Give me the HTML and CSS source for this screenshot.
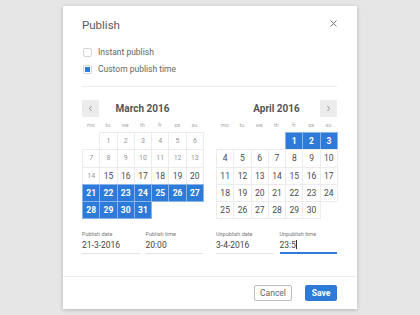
FILE: index.html
```html
<!DOCTYPE html>
<html lang="en">
<head>
    <meta charset="UTF-8">
    <title>Publish</title>
    <link rel="stylesheet" href="styles.css">
</head>
<body>
    <div class="dialog">
        <div class="content">
            <div class="header">
                <span class="title">Publish</span>
                <svg class="close" width="7" height="7" viewBox="0 0 7 7"><path d="M0.5 0.5L6.5 6.5M6.5 0.5L0.5 6.5" stroke="#777" stroke-width="1"/></svg>
            </div>

            <div class="options">
                <label class="option"><span class="check"></span>Instant publish</label>
                <label class="option"><span class="check checked"></span>Custom publish time</label>
            </div>

            <div class="calendars">
                <div class="calendar">
                    <div class="cal-head">
                        <span class="nav"><svg width="5" height="7" viewBox="0 0 5 7"><path d="M3.5 1L1.5 3.5L3.5 6" fill="none" stroke="#888" stroke-width="0.9"/></svg></span>
                        <span class="month">March 2016</span>
                        <span class="nav-space"></span>
                    </div>
                    <div class="weekdays">
                        <span>mo</span><span>tu</span><span>we</span><span>th</span><span>fr</span><span>sa</span><span>su</span>
                    </div>
                    <div class="days">
                        <span class="empty"></span><span class="day past">1</span><span class="day past">2</span><span class="day past">3</span><span class="day past">4</span><span class="day past">5</span><span class="day past">6</span>
                        <span class="day past">7</span><span class="day past">8</span><span class="day past">9</span><span class="day past">10</span><span class="day past">11</span><span class="day past">12</span><span class="day past">13</span>
                        <span class="day past">14</span><span class="day">15</span><span class="day">16</span><span class="day">17</span><span class="day">18</span><span class="day">19</span><span class="day">20</span>
                        <span class="day selected">21</span><span class="day selected">22</span><span class="day selected">23</span><span class="day selected">24</span><span class="day selected">25</span><span class="day selected">26</span><span class="day selected">27</span>
                        <span class="day selected">28</span><span class="day selected">29</span><span class="day selected">30</span><span class="day selected">31</span><span class="empty"></span><span class="empty"></span><span class="empty"></span>
                    </div>
                </div>

                <div class="calendar">
                    <div class="cal-head">
                        <span class="nav-space"></span>
                        <span class="month">April 2016</span>
                        <span class="nav"><svg width="5" height="7" viewBox="0 0 5 7"><path d="M1.5 1L3.5 3.5L1.5 6" fill="none" stroke="#888" stroke-width="0.9"/></svg></span>
                    </div>
                    <div class="weekdays">
                        <span>mo</span><span>tu</span><span>we</span><span>th</span><span>fr</span><span>sa</span><span>su</span>
                    </div>
                    <div class="days">
                        <span class="empty"></span><span class="empty"></span><span class="empty"></span><span class="empty"></span><span class="day selected">1</span><span class="day selected">2</span><span class="day selected">3</span>
                        <span class="day">4</span><span class="day">5</span><span class="day">6</span><span class="day">7</span><span class="day">8</span><span class="day">9</span><span class="day">10</span>
                        <span class="day">11</span><span class="day">12</span><span class="day">13</span><span class="day">14</span><span class="day">15</span><span class="day">16</span><span class="day">17</span>
                        <span class="day">18</span><span class="day">19</span><span class="day">20</span><span class="day">21</span><span class="day">22</span><span class="day">23</span><span class="day">24</span>
                        <span class="day">25</span><span class="day">26</span><span class="day">27</span><span class="day">28</span><span class="day">29</span><span class="day">30</span><span class="empty"></span>
                    </div>
                </div>
            </div>

            <div class="fields">
                <div class="field-group">
                    <div class="field">
                        <div class="field-label">Publish date</div>
                        <div class="field-value">21-3-2016</div>
                    </div>
                    <div class="field">
                        <div class="field-label">Publish time</div>
                        <div class="field-value">20:00</div>
                    </div>
                </div>
                <div class="field-group">
                    <div class="field">
                        <div class="field-label">Unpublish date</div>
                        <div class="field-value">3-4-2016</div>
                    </div>
                    <div class="field">
                        <div class="field-label">Unpublish time</div>
                        <div class="field-value active">23:5<span class="cursor"></span></div>
                    </div>
                </div>
            </div>
        </div>

        <div class="footer">
            <button class="btn cancel">Cancel</button>
            <button class="btn save">Save</button>
        </div>
    </div>
</body>
</html>
```

FILE: styles.css
```css
body {
    margin: 0;
    height: 315px;
    background-color: #e6e6e6;
    font-family: Roboto, 'Liberation Sans', sans-serif;
    color: #555;
    overflow: hidden;
}

.dialog {
    width: 294px;
    height: 303px;
    margin: 6px 0 0 63px;
    background: #fff;
    box-shadow: 0 1px 4px rgba(0, 0, 0, 0.22);
    display: flex;
    flex-direction: column;
}

.content {
    padding: 0 20px 0 19px;
}

.header {
    display: flex;
    justify-content: space-between;
    align-items: flex-start;
    padding-top: 12px;
    height: 14px;
}

.title {
    font-size: 11.5px;
    line-height: 14px;
    color: #5a5a5a;
}

.close {
    margin-top: 2px;
}

.options {
    margin-top: 11.5px;
    padding-bottom: 8.5px;
    border-bottom: 1px solid #ededed;
}

.option {
    display: flex;
    align-items: center;
    height: 17px;
    font-size: 8.5px;
    color: #666;
}

.check {
    width: 7px;
    height: 7px;
    border: 1px solid #d6d6d6;
    border-radius: 2px;
    margin: 0 6px 0 1px;
    display: flex;
    align-items: center;
    justify-content: center;
}

.check.checked::after {
    content: '';
    width: 5px;
    height: 5px;
    background: #2d7ad8;
}

.calendars {
    display: grid;
    grid-template-columns: 121px 121px;
    column-gap: 13px;
    margin-top: 13px;
}

.cal-head {
    display: flex;
    justify-content: space-between;
    align-items: center;
    height: 17px;
}

.nav, .nav-space {
    width: 17px;
    height: 17px;
}

.nav {
    background: #ececec;
    display: flex;
    align-items: center;
    justify-content: center;
}

.month {
    font-size: 10px;
    font-weight: 700;
    color: #555;
}

.weekdays {
    display: grid;
    grid-template-columns: repeat(7, 1fr);
    margin-top: 2px;
    height: 13px;
    line-height: 13px;
    font-size: 5.5px;
    color: #aaa;
    text-align: center;
}

.days {
    display: grid;
    grid-template-columns: repeat(7, 1fr);
    grid-auto-rows: 17.3px;
}

.day {
    border: 1px solid #ececec;
    margin: 0 -1px -1px 0;
    display: flex;
    align-items: center;
    justify-content: center;
    font-size: 8.5px;
    color: #4a4a4a;
}

.day.past {
    font-size: 7px;
    color: #999;
}

.day.selected {
    background: #2d7ad8;
    border-color: #8ab5ea;
    color: #fff;
    font-weight: 700;
}

.fields {
    display: grid;
    grid-template-columns: 121px 121px;
    column-gap: 13px;
    margin-top: 12px;
}

.field-group {
    display: grid;
    grid-template-columns: 1fr 1fr;
    column-gap: 6px;
}

.field-label {
    font-size: 5.5px;
    line-height: 8px;
    color: #777;
}

.field-value {
    font-size: 8.5px;
    line-height: 14px;
    height: 14px;
    padding-bottom: 1px;
    border-bottom: 1px solid #e2e2e2;
    color: #444;
}

.field-value.active {
    padding-bottom: 0;
    border-bottom: 2px solid #2d7ad8;
}

.cursor {
    display: inline-block;
    width: 1px;
    height: 9px;
    background: #333;
    vertical-align: -1px;
}

.footer {
    margin-top: auto;
    height: 33px;
    border-top: 1px solid #ededed;
    display: flex;
    justify-content: flex-end;
    align-items: flex-start;
    gap: 13px;
    padding: 8px 20px 0 0;
    box-sizing: border-box;
}

.btn {
    height: 16px;
    padding: 0;
    border-radius: 2px;
    font-family: Roboto, 'Liberation Sans', sans-serif;
    font-size: 8.5px;
    cursor: pointer;
}

.cancel {
    width: 38px;
    background: #fff;
    border: 1px solid #bdbdbd;
    color: #666;
}

.save {
    width: 32px;
    background: #2d7ad8;
    border: none;
    color: #fff;
    font-weight: 700;
}
```
